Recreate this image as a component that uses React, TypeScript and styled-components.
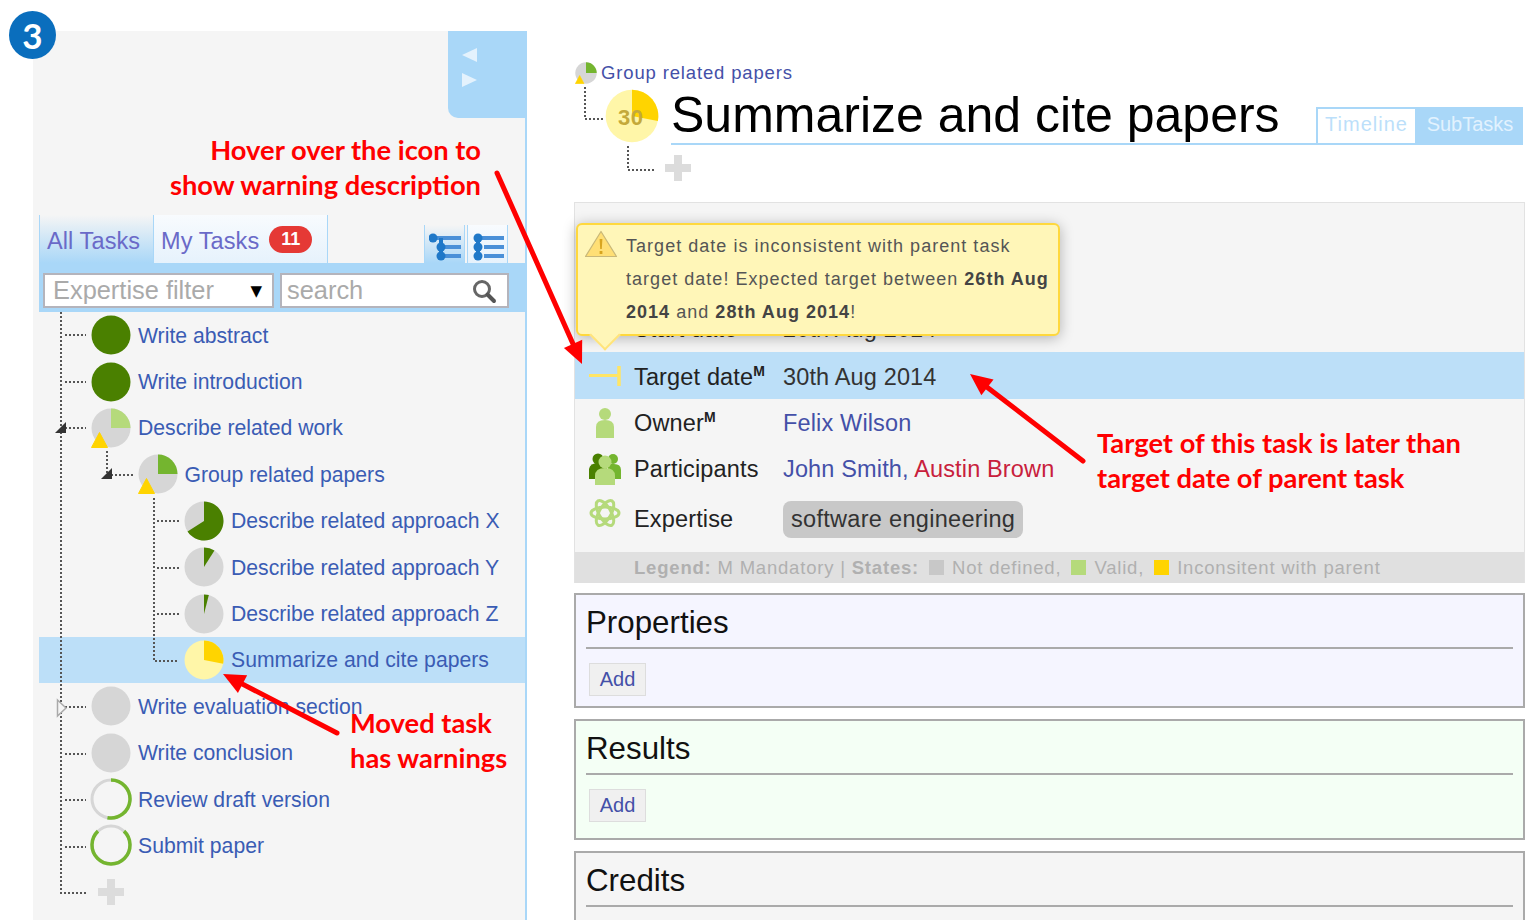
import styled, { createGlobalStyle } from 'styled-components';

const BLUE = '#a9d7f8';
const GREY = '#d6d6d6';
const DARK_GREEN = '#4a8000';
const MID_GREEN = '#74b52f';
const LIGHT_GREEN = '#b5da7b';
const YELLOW = '#ffd400';
const PALE_YELLOW = '#fff6a8';

const GlobalStyle = createGlobalStyle`
  html, body { margin: 0; padding: 0; background: #fff; }
  body { font-family: "Liberation Sans", Arial, sans-serif; }
  * { box-sizing: border-box; }
`;

type TaskIconSpec =
  | { type: 'pie'; value: number; fill: string; base?: string; warn?: boolean }
  | { type: 'ring'; from: number; to: number };

interface Task {
  label: string;
  depth: number;
  icon: TaskIconSpec;
  selected?: boolean;
}

const tasks: Task[] = [
  { label: 'Write abstract', depth: 0, icon: { type: 'pie', value: 1, fill: DARK_GREEN } },
  { label: 'Write introduction', depth: 0, icon: { type: 'pie', value: 1, fill: DARK_GREEN } },
  { label: 'Describe related work', depth: 0, icon: { type: 'pie', value: 0.25, fill: LIGHT_GREEN, warn: true } },
  { label: 'Group related papers', depth: 1, icon: { type: 'pie', value: 0.25, fill: MID_GREEN, warn: true } },
  { label: 'Describe related approach X', depth: 2, icon: { type: 'pie', value: 0.66, fill: DARK_GREEN } },
  { label: 'Describe related approach Y', depth: 2, icon: { type: 'pie', value: 0.09, fill: DARK_GREEN } },
  { label: 'Describe related approach Z', depth: 2, icon: { type: 'pie', value: 0.04, fill: DARK_GREEN } },
  { label: 'Summarize and cite papers', depth: 2, selected: true, icon: { type: 'pie', value: 0.28, fill: YELLOW, base: PALE_YELLOW } },
  { label: 'Write evaluation section', depth: 0, icon: { type: 'pie', value: 0, fill: GREY } },
  { label: 'Write conclusion', depth: 0, icon: { type: 'pie', value: 0, fill: GREY } },
  { label: 'Review draft version', depth: 0, icon: { type: 'ring', from: 0, to: 0.53 } },
  { label: 'Submit paper', depth: 0, icon: { type: 'ring', from: 0.12, to: 0.88 } },
];

function polar(c: number, r: number, t: number) {
  const a = t * Math.PI * 2;
  return [c + r * Math.sin(a), c - r * Math.cos(a)];
}

function arcPath(c: number, r: number, from: number, to: number, closed: boolean) {
  const [x1, y1] = polar(c, r, from);
  const [x2, y2] = polar(c, r, to);
  const big = to - from > 0.5 ? 1 : 0;
  const arc = `A${r} ${r} 0 ${big} 1 ${x2} ${y2}`;
  return closed ? `M${c} ${c}L${x1} ${y1}${arc}Z` : `M${x1} ${y1}${arc}`;
}

const TaskIcon = ({ icon, size = 40 }: { icon: TaskIconSpec; size?: number }) => {
  if (icon.type === 'ring') {
    return (
      <svg width={size + 2} height={size + 2} viewBox="0 0 42 42" style={{ margin: -1, flex: 'none' }}>
        <circle cx="21" cy="21" r="19" fill="none" stroke={GREY} strokeWidth="3" />
        <path d={arcPath(21, 19, icon.from, icon.to, false)} fill="none" stroke={MID_GREEN} strokeWidth="3.5" />
      </svg>
    );
  }
  return (
    <svg width={size} height={size} viewBox="0 0 40 40" style={{ flex: 'none' }}>
      <circle cx="20" cy="20" r="19.5" fill={icon.value === 1 ? icon.fill : icon.base || GREY} />
      {icon.value > 0 && icon.value < 1 && <path d={arcPath(20, 19.5, 0, icon.value, true)} fill={icon.fill} />}
      {icon.warn && <path d="M8.5 24.5L16.5 39.5H0.5Z" fill={YELLOW} stroke={YELLOW} strokeLinejoin="round" />}
    </svg>
  );
};

const PlusIcon = () => (
  <svg width="28" height="28" viewBox="0 0 28 28">
    <path d="M10 1h8v9h9v8h-9v9h-8v-9H1v-8h9z" fill="#dcdcdc" />
  </svg>
);

const TreeToggleIcon = ({ flat }: { flat?: boolean }) => (
  <svg width="32" height="28" viewBox="0 0 32 28">
    <g fill="#4a90d8">
      <rect x="8" y="3" width="24" height="4" />
      <rect x="12" y="12" width="20" height="4" />
      <rect x="12" y="21" width="20" height="4" />
    </g>
    <g fill="#1f78c8">
      <circle cx={flat ? 6 : 4} cy="5" r="4.5" />
      <circle cx={flat ? 6 : 12} cy="14" r="4.5" />
      <circle cx={flat ? 6 : 12} cy="23" r="4.5" />
      <rect x={flat ? 4 : 10} y="5" width="4" height="18" />
    </g>
  </svg>
);

const SearchIcon = () => (
  <svg width="26" height="26" viewBox="0 0 26 26">
    <circle cx="11" cy="11" r="7.5" fill="none" stroke="#666" strokeWidth="3" />
    <path d="M16.5 16.5L23 23" stroke="#555" strokeWidth="4" strokeLinecap="round" />
  </svg>
);

const WarningIcon = () => (
  <svg width="34" height="28" viewBox="0 0 34 28" style={{ flex: 'none' }}>
    <path d="M17 1.5L32.5 26.5H1.5Z" fill="#ffdf75" stroke="#c9b878" strokeWidth="1.2" strokeLinejoin="round" />
    <path d="M15.6 9h2.8l-.6 10h-1.6zM15.6 21h2.8v3h-2.8z" fill="#d8a520" />
  </svg>
);

const TargetIcon = () => (
  <svg width="34" height="24" viewBox="0 0 34 24" style={{ marginTop: -3 }}>
    <path d="M1 11.5H30" stroke="#ffe566" strokeWidth="3" />
    <path d="M31 2V22" stroke="#ffe566" strokeWidth="3.5" />
  </svg>
);

const PersonIcon = () => (
  <svg width="24" height="32" viewBox="0 0 24 32">
    <circle cx="12" cy="7" r="6" fill={LIGHT_GREEN} />
    <path d="M3 31V20q0-7 9-7t9 7v11z" fill={LIGHT_GREEN} />
  </svg>
);

const PeopleIcon = () => (
  <svg width="34" height="34" viewBox="0 0 34 34">
    <circle cx="10" cy="7" r="5.5" fill={DARK_GREEN} />
    <path d="M1 27V17q1-6 9-6t9 6v10z" fill={DARK_GREEN} />
    <circle cx="25" cy="7" r="5" fill={MID_GREEN} />
    <path d="M20 27V12h6q7 0 7 6v9z" fill={MID_GREEN} />
    <circle cx="17" cy="10" r="6.5" fill={LIGHT_GREEN} />
    <path d="M7 33V24q0-8 10-8t10 8v9z" fill={LIGHT_GREEN} />
  </svg>
);

const AtomIcon = () => (
  <svg width="32" height="32" viewBox="0 0 32 32" style={{ marginTop: -14 }}>
    <g fill="none" stroke={LIGHT_GREEN} strokeWidth="3">
      <ellipse cx="16" cy="16" rx="14" ry="6" />
      <ellipse cx="16" cy="16" rx="14" ry="6" transform="rotate(60 16 16)" />
      <ellipse cx="16" cy="16" rx="14" ry="6" transform="rotate(120 16 16)" />
    </g>
  </svg>
);

// head of a red annotation arrow, drawn back from the tip along the line
function arrowHead(x1: number, y1: number, x2: number, y2: number) {
  const len = Math.hypot(x2 - x1, y2 - y1);
  const ux = (x2 - x1) / len;
  const uy = (y2 - y1) / len;
  const bx = x2 - ux * 22;
  const by = y2 - uy * 22;
  return `${x2},${y2} ${bx - uy * 10},${by + ux * 10} ${bx + uy * 10},${by - ux * 10}`;
}

const arrows = [
  [497, 173, 582, 364],
  [337, 733, 223, 674],
  [1083, 461, 970, 374],
];

const Page = styled.div`
  position: relative;
  display: flex;
  width: 1533px;
  height: 920px;
  overflow: hidden;
  background: #fff;
`;

const StepBadge = styled.div`
  position: absolute;
  left: 9px;
  top: 11px;
  z-index: 3;
  display: flex;
  align-items: center;
  justify-content: center;
  width: 47px;
  height: 48px;
  border-radius: 50%;
  background: #0a6ebd;
  color: #fff;
  font: 700 35px "Lato", sans-serif;
`;

const LeftPanel = styled.aside`
  width: 494px;
  height: 889px;
  margin: 31px 0 0 33px;
  padding-left: 6px;
  background: #f5f5f5;
  border-right: 2px solid ${BLUE};
  flex: none;
`;

const CollapseTab = styled.div`
  display: flex;
  flex-direction: column;
  gap: 11px;
  width: 79px;
  height: 87px;
  margin: 0 -2px 0 auto;
  padding: 17px 0 0 14px;
  background: ${BLUE};
  border-bottom-left-radius: 10px;
`;

const CollapseArrow = styled.span<{ $right?: boolean }>`
  width: 0;
  height: 0;
  border-top: 7px solid transparent;
  border-bottom: 7px solid transparent;
  ${(p) => (p.$right ? 'border-left: 15px solid #e4f2fd;' : 'border-right: 15px solid #e4f2fd;')}
`;

const TabsBar = styled.div`
  display: flex;
  height: 48px;
  margin-top: 97px;
`;

const ListTab = styled.div<{ $active?: boolean }>`
  display: flex;
  align-items: center;
  gap: 10px;
  padding: 4px 0 0 7px;
  font-size: 23.5px;
  letter-spacing: 0.1px;
  color: #6a6ac8;
  border-left: 1px solid ${BLUE};
  background: ${(p) =>
    p.$active ? `linear-gradient(#f5f5f5, ${BLUE})` : 'linear-gradient(#f8fbfe, #e6f2fc)'};
  ${(p) => (p.$active ? 'width: 114px;' : `width: 175px; border-right: 1px solid ${BLUE};`)}
`;

const CountBadge = styled.span`
  display: flex;
  align-items: center;
  justify-content: center;
  width: 43px;
  height: 27px;
  margin-top: -4px;
  border-radius: 14px;
  background: #e53935;
  color: #fff;
  font-size: 18px;
  font-weight: 700;
`;

const ViewToggles = styled.div`
  display: flex;
  gap: 2px;
  align-self: flex-end;
  height: 38px;
  margin-left: auto;
  margin-right: 17px;
`;

const ViewToggle = styled.div<{ $active?: boolean }>`
  display: flex;
  justify-content: center;
  width: 41px;
  padding-top: 8px;
  background: ${(p) => (p.$active ? `linear-gradient(#f5f5f5, ${BLUE})` : 'linear-gradient(#f8fbfe, #e6f2fc)')};
  border-left: 1px solid ${BLUE};
  border-right: 1px solid ${BLUE};
`;

const FilterRow = styled.div`
  display: flex;
  gap: 6px;
  height: 49px;
  padding: 10px 16px 4px 4px;
  background: ${BLUE};
`;

const FilterBox = styled.div<{ $width: number; $inset: number }>`
  display: flex;
  align-items: center;
  justify-content: space-between;
  width: ${(p) => p.$width}px;
  padding: 0 10px 0 ${(p) => p.$inset}px;
  background: #fff;
  border: 2px solid #b4b4bc;
  font-size: 25.4px;
  color: #aaa;
`;

const Caret = styled.span`
  font: 15px "DejaVu Sans", sans-serif;
  color: #000;
`;

const Tree = styled.div`
  position: relative;
`;

const TreeGuides = styled.svg`
  position: absolute;
  left: 0;
  top: 0;
  z-index: 1;
  pointer-events: none;
`;

const TaskRow = styled.div<{ $depth: number; $selected?: boolean }>`
  display: flex;
  align-items: center;
  gap: 7px;
  height: 46.4px;
  padding-left: ${(p) => 52 + p.$depth * 46.5}px;
  background: ${(p) => (p.$selected ? '#bcdff8' : 'transparent')};
`;

const TaskLabel = styled.span`
  padding-top: 1px;
  font-size: 21.2px;
  color: #3a5cb4;
  white-space: nowrap;
`;

const AddSlot = styled.div`
  display: flex;
  justify-content: center;
  width: 40px;
`;

const RightPanel = styled.main`
  width: 951px;
  margin-left: 47px;
  flex: none;
`;

const Header = styled.header`
  position: relative;
  height: 202px;
  padding-top: 62px;
`;

const HeaderGuides = styled.svg`
  position: absolute;
  left: 0;
  top: 0;
  pointer-events: none;
`;

const Crumb = styled.div`
  display: flex;
  align-items: center;
  gap: 4px;
  height: 22px;
  margin-left: 1px;
  font-size: 18.5px;
  letter-spacing: 0.85px;
  color: #4450a8;
`;

const TitleRow = styled.div`
  display: flex;
  align-items: flex-start;
  gap: 12px;
  margin: 5px 0 0 31px;
`;

const BigIcon = styled.div`
  position: relative;
  width: 54px;
  height: 54px;
  flex: none;
`;

const BigIconNumber = styled.span`
  position: absolute;
  left: 13px;
  top: 16px;
  font-size: 22px;
  font-weight: 700;
  letter-spacing: 0.5px;
  color: #c4a93a;
`;

const TitleBlock = styled.div`
  display: flex;
  justify-content: space-between;
  align-items: flex-end;
  flex: 1;
  height: 56px;
  margin-right: 2px;
  border-bottom: 2px solid ${BLUE};
`;

const Title = styled.h1`
  margin: 0;
  font-size: 50px;
  font-weight: 400;
  line-height: 56px;
  color: #000;
  white-space: nowrap;
`;

const ViewTabs = styled.div`
  display: flex;
  height: 38px;
  margin-bottom: -2px;
`;

const ViewTab = styled.div<{ $active?: boolean }>`
  display: flex;
  align-items: center;
  justify-content: center;
  width: ${(p) => (p.$active ? 106 : 101)}px;
  padding-bottom: 3px;
  border: 2px solid ${BLUE};
  background: ${(p) => (p.$active ? BLUE : '#fff')};
  color: ${(p) => (p.$active ? '#e2f2fe' : '#bcdffa')};
  font-size: 20px;
  letter-spacing: ${(p) => (p.$active ? 0 : 1)}px;
`;

const PlusRow = styled.div`
  margin: 9px 0 0 90px;
`;

const DetailBlock = styled.section`
  position: relative;
  height: 381px;
  padding-top: 103px;
  background: #f5f5f5;
  border: 1px solid #e2e2e2;
`;

const DetailRow = styled.div<{ $height: number; $highlight?: boolean }>`
  display: flex;
  align-items: center;
  height: ${(p) => p.$height}px;
  padding-top: ${(p) => (p.$highlight ? 3 : 0)}px;
  background: ${(p) => (p.$highlight ? '#bcdff8' : 'transparent')};
  font-size: 23.5px;
  letter-spacing: 0.15px;
  color: #333;
`;

const RowIcon = styled.div`
  display: flex;
  justify-content: center;
  width: 59px;
  flex: none;
`;

const RowLabel = styled.div`
  width: 149px;
  flex: none;
  color: #222;
`;

const Mark = styled.sup`
  font-size: 14px;
  font-weight: 700;
  line-height: 0;
`;

const PersonLink = styled.span<{ $warn?: boolean }>`
  color: ${(p) => (p.$warn ? '#c8203c' : '#4450a8')};
`;

const Chip = styled.span`
  padding: 5px 8px;
  border-radius: 8px;
  background: #c8c8c8;
  letter-spacing: 0.3px;
  color: #333;
`;

const Legend = styled.div`
  display: flex;
  align-items: center;
  gap: 8px;
  height: 31px;
  margin-top: 4px;
  padding-left: 59px;
  background: #e0e0e0;
  font-size: 18.5px;
  letter-spacing: 0.8px;
  color: #b0b0b0;
  white-space: pre;
`;

const Swatch = styled.span<{ $color: string }>`
  width: 15px;
  height: 15px;
  margin-left: 2px;
  background: ${(p) => p.$color};
`;

const Tooltip = styled.div`
  position: absolute;
  left: 1px;
  top: 20px;
  z-index: 2;
  display: flex;
  gap: 8px;
  width: 484px;
  height: 113px;
  padding: 5px 0 0 6px;
  background: #fff6b8;
  border: 2px solid #ffd83d;
  border-radius: 6px;
  box-shadow: 0 2px 14px rgba(0, 0, 0, 0.28);
  &::after {
    content: '';
    position: absolute;
    left: 16px;
    bottom: -12px;
    width: 20px;
    height: 20px;
    background: #fff6b8;
    border-right: 2px solid #ffe37a;
    border-bottom: 2px solid #ffe37a;
    transform: rotate(45deg);
  }
`;

const TooltipText = styled.div`
  font-size: 18px;
  line-height: 33px;
  letter-spacing: 1.03px;
  color: #555;
  white-space: nowrap;
  b { color: #444; }
`;

const Section = styled.section<{ $bg: string; $bottom: number }>`
  margin-top: 10px;
  padding: 0 10px ${(p) => p.$bottom}px;
  background: ${(p) => p.$bg};
  border: 2px solid #aaa;
  & + & { margin-top: 11px; }
`;

const SectionTitle = styled.h2`
  height: 54px;
  margin: 0;
  padding-top: 8px;
  font-size: 31.3px;
  font-weight: 400;
  line-height: 40px;
  color: #111;
  border-bottom: 2px solid #aaa;
`;

const AddButton = styled.button`
  display: block;
  width: 57px;
  height: 33px;
  margin: 14px 0 0 3px;
  padding: 0;
  background: #f0f0f0;
  border: 1px solid #ddd;
  font: 20px "Liberation Sans", Arial, sans-serif;
  color: #4450a8;
`;

const Note = styled.div<{ $left?: number; $right?: number; $top: number }>`
  position: absolute;
  top: ${(p) => p.$top}px;
  ${(p) => (p.$left !== undefined ? `left: ${p.$left}px;` : `right: ${p.$right}px; text-align: right;`)}
  z-index: 4;
  font: 700 27.3px/35px "Lato", sans-serif;
  color: #f00;
  white-space: nowrap;
`;

const ArrowLayer = styled.svg`
  position: absolute;
  left: 0;
  top: 0;
  z-index: 3;
  pointer-events: none;
`;

const App = () => (
  <>
    <GlobalStyle />
    <Page>
      <StepBadge>3</StepBadge>

      <LeftPanel>
        <CollapseTab>
          <CollapseArrow />
          <CollapseArrow $right />
        </CollapseTab>
        <TabsBar>
          <ListTab $active>All Tasks</ListTab>
          <ListTab>
            My Tasks <CountBadge>11</CountBadge>
          </ListTab>
          <ViewToggles>
            <ViewToggle $active>
              <TreeToggleIcon />
            </ViewToggle>
            <ViewToggle>
              <TreeToggleIcon flat />
            </ViewToggle>
          </ViewToggles>
        </TabsBar>
        <FilterRow>
          <FilterBox $width={231} $inset={8}>
            Expertise filter <Caret>▼</Caret>
          </FilterBox>
          <FilterBox $width={229} $inset={5}>
            search <SearchIcon />
          </FilterBox>
        </FilterRow>
        <Tree>
          {tasks.map((t) => (
            <TaskRow key={t.label} $depth={t.depth} $selected={t.selected}>
              <TaskIcon icon={t.icon} />
              <TaskLabel>{t.label}</TaskLabel>
            </TaskRow>
          ))}
          <TaskRow $depth={0}>
            <AddSlot>
              <PlusIcon />
            </AddSlot>
          </TaskRow>
          <TreeGuides width="486" height="604" viewBox="0 0 486 604">
            <g fill="none" stroke="#555" strokeWidth="2" strokeDasharray="2 2">
              <path d="M22 0V581H47" />
              <path d="M26 23H47M26 70H47M26 116H47" />
              <path d="M26 395H47M26 442H47M26 488H47M26 535H47" />
              <path d="M68 139V163M72 163H94" />
              <path d="M115 186V349H140" />
              <path d="M118 209H140M118 256H140M118 302H140" />
            </g>
            <path d="M16 121L27 110V121Z" fill="#333" />
            <path d="M62 167L73 156V167Z" fill="#333" />
            <path d="M18.5 388L27 396L18.5 404Z" fill="#f5f5f5" stroke="#aaa" strokeWidth="1.5" />
          </TreeGuides>
        </Tree>
      </LeftPanel>

      <RightPanel>
        <Header>
          <HeaderGuides width="200" height="202" viewBox="0 0 200 202">
            <g fill="none" stroke="#555" strokeWidth="2" strokeDasharray="2 2">
              <path d="M11 87V119H30" />
              <path d="M54 146V170H80" />
            </g>
          </HeaderGuides>
          <Crumb>
            <TaskIcon size={22} icon={{ type: 'pie', value: 0.25, fill: MID_GREEN, warn: true }} />
            Group related papers
          </Crumb>
          <TitleRow>
            <BigIcon>
              <TaskIcon size={54} icon={{ type: 'pie', value: 0.28, fill: YELLOW, base: PALE_YELLOW }} />
              <BigIconNumber>30</BigIconNumber>
            </BigIcon>
            <TitleBlock>
              <Title>Summarize and cite papers</Title>
              <ViewTabs>
                <ViewTab>Timeline</ViewTab>
                <ViewTab $active>SubTasks</ViewTab>
              </ViewTabs>
            </TitleBlock>
          </TitleRow>
          <PlusRow>
            <PlusIcon />
          </PlusRow>
        </Header>

        <DetailBlock>
          <Tooltip>
            <WarningIcon />
            <TooltipText>
              Target date is inconsistent with parent task
              <br />
              target date! Expected target between <b>26th Aug</b>
              <br />
              <b>2014</b> and <b>28th Aug 2014</b>!
            </TooltipText>
          </Tooltip>
          <DetailRow $height={46}>
            <RowIcon />
            <RowLabel>Start date</RowLabel>
            20th Aug 2014
          </DetailRow>
          <DetailRow $height={47} $highlight>
            <RowIcon>
              <TargetIcon />
            </RowIcon>
            <RowLabel>
              Target date<Mark>M</Mark>
            </RowLabel>
            30th Aug 2014
          </DetailRow>
          <DetailRow $height={48}>
            <RowIcon>
              <PersonIcon />
            </RowIcon>
            <RowLabel>
              Owner<Mark>M</Mark>
            </RowLabel>
            <PersonLink>Felix Wilson</PersonLink>
          </DetailRow>
          <DetailRow $height={44}>
            <RowIcon>
              <PeopleIcon />
            </RowIcon>
            <RowLabel>Participants</RowLabel>
            <span>
              <PersonLink>John Smith,</PersonLink> <PersonLink $warn>Austin Brown</PersonLink>
            </span>
          </DetailRow>
          <DetailRow $height={57}>
            <RowIcon>
              <AtomIcon />
            </RowIcon>
            <RowLabel>Expertise</RowLabel>
            <Chip>software engineering</Chip>
          </DetailRow>
          <Legend>
            <span>
              <b>Legend:</b> M Mandatory | <b>States:</b>
            </span>
            <Swatch $color="#c8c8c8" />
            <span>Not defined,</span>
            <Swatch $color={LIGHT_GREEN} />
            <span>Valid,</span>
            <Swatch $color={YELLOW} />
            <span>Inconsitent with parent</span>
          </Legend>
        </DetailBlock>

        <Section $bg="#f5f5ff" $bottom={10}>
          <SectionTitle>Properties</SectionTitle>
          <AddButton>Add</AddButton>
        </Section>
        <Section $bg="#f4fff5" $bottom={16}>
          <SectionTitle>Results</SectionTitle>
          <AddButton>Add</AddButton>
        </Section>
        <Section $bg="#f5f5f5" $bottom={40}>
          <SectionTitle>Credits</SectionTitle>
        </Section>
      </RightPanel>

      <Note $right={1052} $top={132}>
        Hover over the icon to
        <br />
        show warning description
      </Note>
      <Note $left={350} $top={705}>
        Moved task
        <br />
        has warnings
      </Note>
      <Note $left={1097} $top={425}>
        Target of this task is later than
        <br />
        target date of parent task
      </Note>

      <ArrowLayer width="1533" height="920" viewBox="0 0 1533 920">
        {arrows.map(([x1, y1, x2, y2]) => (
          <g key={x1}>
            <line x1={x1} y1={y1} x2={(x1 + x2 * 9) / 10} y2={(y1 + y2 * 9) / 10} stroke="#f00" strokeWidth="5" strokeLinecap="round" />
            <polygon points={arrowHead(x1, y1, x2, y2)} fill="#f00" />
          </g>
        ))}
      </ArrowLayer>
    </Page>
  </>
);

export default App;
